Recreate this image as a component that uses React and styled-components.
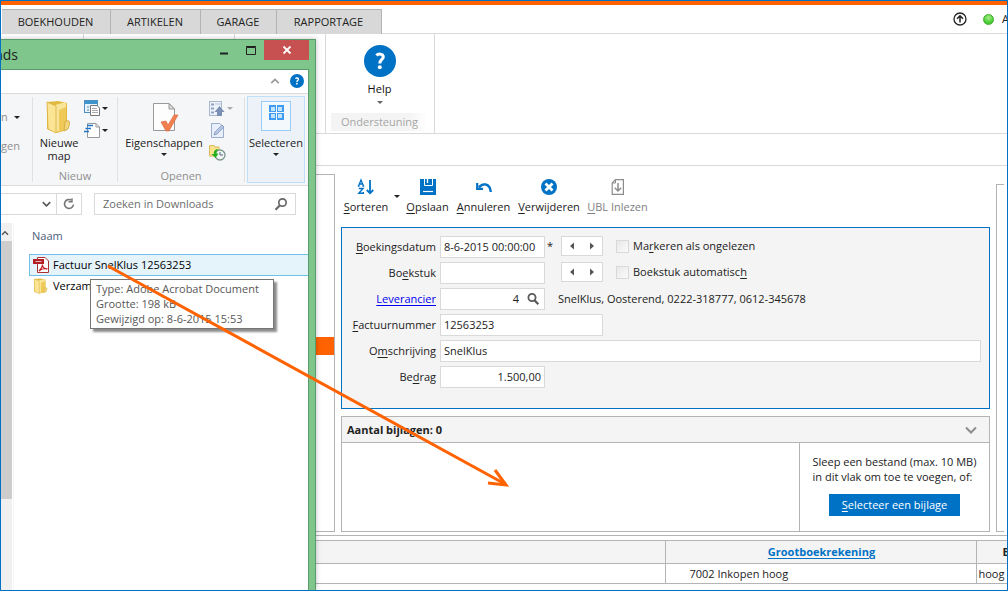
import React from 'react'
import styled, { createGlobalStyle, css } from 'styled-components'

const BLUE = '#0072c6'
const ORANGE = '#ff6200'
const GREEN = '#7fc68c'
const GREEN_DARK = '#5c9c6c'
const LINE = '#b4b4b4'
const LINE_LIGHT = '#d9d9d9'
const PANEL = '#f4f4f4'

const GlobalStyle = createGlobalStyle`
  * { box-sizing: border-box; }
  body { margin: 0; background: #fff; }
  body, button, input {
    font-family: "Open Sans", "Noto Sans", sans-serif;
    font-size: 11px;
    line-height: 16px;
    color: #222;
  }
  button { background: none; border: 0; padding: 0; }
`

const Frame = styled.div`
  position: relative;
  display: flex;
  flex-direction: column;
  min-height: 100vh;
  border: 1px solid ${BLUE};
  overflow: hidden;
`

/* ---------- top of the bookkeeping app ---------- */

const TopStripe = styled.div`
  height: 4px;
  background: ${ORANGE};
`

const TabBar = styled.div`
  display: flex;
  align-items: flex-end;
  height: 29px;
  padding-left: 1px;
  border-bottom: 1px solid ${LINE_LIGHT};
`

const Tab = styled.button`
  height: 25px;
  width: ${props => props.$width}px;
  margin-bottom: -1px;
  padding-right: 1px;
  background: #d8d8d8;
  border-top: 1px solid ${LINE};
  border-right: 1px solid ${LINE};
  white-space: nowrap;
  display: flex;
  align-items: center;
  justify-content: center;
`

const Status = styled.div`
  display: flex;
  align-items: center;
  gap: 14px;
  height: 28px;
  margin-left: auto;
  width: 54px;
  overflow: hidden;
  white-space: nowrap;

  svg, span { flex: none; }
`

const StatusDot = styled.span`
  width: 11px;
  height: 11px;
  border-radius: 50%;
  margin: 0 -6px 0 2px;
  border: 1px solid #3fae2a;
  background: radial-gradient(circle at 50% 30%, #a4ee84, #3cc72c 75%);
`

const Ribbon = styled.div`
  display: flex;
  height: 100px;
  border-bottom: 1px solid ${LINE_LIGHT};
`

const RibbonGroup = styled.div`
  width: ${props => props.$width}px;
  border-right: 1px solid ${LINE_LIGHT};
  display: flex;
  flex-direction: column;
  align-items: center;
  padding: 11px 6px 2px 5px;
`

const HelpButton = styled.button`
  display: flex;
  flex-direction: column;
  align-items: center;
  gap: 4px;
  color: #111;
`

const GroupCaption = styled.div`
  align-self: stretch;
  margin-top: auto;
  height: 18px;
  line-height: 17px;
  text-align: center;
  color: #a6a6a6;
  background: linear-gradient(90deg, ${PANEL} 80%, #fff);
`

const Strip = styled.div`
  height: 32px;
  border-bottom: 1px solid ${LINE_LIGHT};
`

const Workspace = styled.div`
  flex: 1;
  display: flex;
  gap: 6px;
  padding: 8px 3px 3px 0;
  border-bottom: 1px solid ${LINE};
`

const ListPanel = styled.div`
  width: 334px;
  flex: none;
  border: 1px solid ${LINE};
  border-left: 0;
  padding-top: 162px;
`

const ListSelection = styled.div`
  height: 18px;
  background: ${ORANGE};
`

const SidePanel = styled.div`
  width: 8px;
  flex: none;
  margin-top: 10px;
  border: 1px solid ${LINE};
  border-right: 0;
`

const Main = styled.main`
  flex: 1;
  min-width: 0;
  display: flex;
  flex-direction: column;
`

/* ---------- toolbar ---------- */

const Toolbar = styled.div`
  display: flex;
  align-items: flex-start;
  gap: 7px;
  padding: 4px 0 0 3px;
  height: 53px;
`

const ToolButton = styled.button`
  width: ${props => props.$width}px;
  display: flex;
  flex-direction: column;
  align-items: center;
  gap: 3px;
  white-space: nowrap;
  color: ${props => (props.$muted ? '#808080' : '#222')};
`

const DropMark = styled.span`
  width: 0;
  height: 0;
  border: solid transparent;
  border-width: 3px 3px 0;
  border-top-color: ${props => props.$color || '#222'};
`

const SortDrop = styled.button`
  width: 4px;
  height: 20px;
  display: flex;
  align-items: flex-end;
  justify-content: center;
`

const Key = styled.span`
  text-decoration: underline;
  text-underline-offset: 2px;
`

/* ---------- form ---------- */

const Form = styled.form`
  height: 182px;
  border: 1px solid ${BLUE};
  background: ${PANEL};
  padding: 8px;
  display: grid;
  grid-template-columns: 86px 1fr;
  grid-auto-rows: 22px;
  gap: 4px;
`

const Label = styled.label`
  line-height: 22px;
  text-align: right;
  white-space: nowrap;
  display: flex;
  justify-content: flex-end;
  align-items: center;

  a { color: #0000ee; text-underline-offset: 2px; }
`

const Cell = styled.div`
  display: flex;
  align-items: center;
  white-space: nowrap;
`

const inputBox = css`
  height: 22px;
  border: 1px solid ${LINE_LIGHT};
  background: #fff;
`

const TextInput = styled.input`
  ${inputBox}
  width: ${props => props.$width || '105px'};
  padding: 0 3px 1px;
  text-align: ${props => props.$align || 'left'};
  outline: 0;
`

const LookupBox = styled.div`
  ${inputBox}
  width: 105px;
  display: flex;
  align-items: center;
  padding-right: 4px;

  input {
    flex: 1;
    min-width: 0;
    border: 0;
    outline: 0;
    text-align: right;
    padding: 0 7px 0 0;
    background: none;
  }
  button { display: flex; }
`

const Required = styled.span`
  width: 16px;
  padding-left: 2px;
`

const Stepper = styled.div`
  ${inputBox}
  height: 20px;
  width: 42px;
  display: flex;
  margin-right: 13px;

  button {
    flex: 1;
    display: flex;
    align-items: center;
    justify-content: center;
  }
`

const FieldRow = styled(Cell)`
  padding-bottom: 2px;

  > input { margin-bottom: -2px; }
`

const CheckLabel = styled.label`
  display: flex;
  align-items: center;
  gap: 4px;

  input {
    appearance: none;
    width: 13px;
    height: 13px;
    margin: 0;
    border: 1px solid ${LINE_LIGHT};
    background: linear-gradient(135deg, #e9e9e9, #fafafa);
  }
`

const SupplierInfo = styled.span`
  padding-left: 13px;
`

/* ---------- attachments ---------- */

const Attachments = styled.section`
  margin-top: 7px;
  flex: 1;
  border: 1px solid ${LINE};
  display: flex;
  flex-direction: column;
`

const AttachmentsHead = styled.div`
  height: 26px;
  padding: 0 12px 0 5px;
  display: flex;
  align-items: center;
  justify-content: space-between;
  background: ${PANEL};
  border-bottom: 1px solid ${LINE};
  font-weight: bold;
`

const AttachmentsBody = styled.div`
  flex: 1;
  display: flex;
  justify-content: flex-end;
`

const DropHint = styled.div`
  width: 190px;
  border-left: 1px solid ${LINE};
  padding-top: 11px;
  display: flex;
  flex-direction: column;
  align-items: center;
  line-height: 15px;
  white-space: nowrap;
`

const SelectButton = styled.button`
  width: 131px;
  height: 22px;
  margin-top: 10px;
  background: ${BLUE};
  color: #fff;
`

/* ---------- ledger table ---------- */

const LedgerTable = styled.table`
  margin: 4px 0 6px;
  width: 100%;
  table-layout: fixed;
  border-collapse: collapse;

  th, td {
    border: 1px solid ${LINE};
    padding: 0 0 0 2px;
    overflow: hidden;
    white-space: nowrap;
    text-align: left;
  }
  th:first-child, td:first-child { border-left: 0; }
  th:last-child, td:last-child { border-right: 0; }
  th { height: 23px; background: ${PANEL}; }
  td { height: 20px; }
  th:nth-child(2) { text-align: center; }
  td:nth-child(2) { padding-left: 24px; }
  th:last-child { padding-left: 26px; }
  a { color: ${BLUE}; text-underline-offset: 2px; }
`

/* ---------- explorer window, floats over the app ---------- */

const Explorer = styled.div`
  position: absolute;
  left: 0;
  top: 38px;
  bottom: 0;
  width: 315px;
  display: flex;
  flex-direction: column;
  background: ${GREEN};
  border: 1px solid ${GREEN_DARK};
  border-width: 1px 1px 0 0;
  padding-right: 6px;
  box-shadow: 0 0 5px rgba(0, 0, 0, 0.25);
`

const TitleBar = styled.div`
  height: 29px;
  flex: none;
  display: flex;
  align-items: flex-start;
`

const Title = styled.div`
  width: 17px;
  font-size: 14px;
  line-height: 30px;
  display: flex;
  justify-content: flex-end;
  overflow: hidden;
`

const WindowButtons = styled.div`
  margin-left: auto;
  display: flex;

  button {
    width: 27px;
    height: 20px;
    display: flex;
    justify-content: center;
    align-items: center;
  }
  button:last-child { width: 45px; background: #c75050; }
`

const WindowBody = styled.div`
  flex: 1;
  display: flex;
  flex-direction: column;
  background: #fff;
  border: 1px solid ${GREEN_DARK};
  border-width: 1px 1px 0 0;
`

const HelpBar = styled.div`
  height: 24px;
  display: flex;
  align-items: center;
  justify-content: flex-end;
  gap: 10px;
  padding: 0 4px 2px 0;
  border-bottom: 1px solid #dadbdc;

  button { display: flex; }
`

const ExplorerRibbon = styled.div`
  height: 92px;
  display: flex;
  padding: 3px 3px 3px 0;
  background: #f5f6f7;
  border-bottom: 1px solid #dadbdc;
  line-height: 13px;
`

const ExplorerGroup = styled.div`
  flex: none;
  width: ${props => props.$width}px;
  border-right: 1px solid #e0e1e2;
  display: flex;
  flex-direction: column;
  justify-content: space-between;
  overflow: hidden;
`

const GroupTools = styled.div`
  display: flex;
  gap: 5px;
  padding: 3px 0 0 6px;
`

const CutOff = styled.div`
  width: 20px;
  display: flex;
  flex-direction: column;
  align-items: flex-start;
  gap: 14px;
  padding-top: 12px;
  color: #8f8f8f;

  button { display: flex; align-items: center; gap: 6px; color: inherit; }
`

const GroupName = styled.div`
  text-align: center;
  color: #8f8f8f;
  line-height: 12px;
`

const BigTool = styled.button`
  width: ${props => props.$width}px;
  display: flex;
  flex-direction: column;
  align-items: center;
  line-height: 13px;
  color: #222;

  svg { margin-bottom: 2px; }
  span { margin-top: 4px; }
`

const SmallTools = styled.div`
  display: flex;
  flex-direction: column;
  gap: 5px;

  button { display: flex; align-items: center; gap: 1px; }
`

const SelectTool = styled(BigTool)`
  flex: 1;
  margin: -1px 0 -1px 2px;
  padding-top: 4px;
  background: #ecf2f7;
  border: 1px solid #bfdff8;

  svg { margin-bottom: 5px; }
`

const AddressRow = styled.div`
  display: flex;
  padding: 7px 12px 8px 0;
  height: 37px;
`

const AddressTail = styled.div`
  width: 81px;
  margin-right: 12px;
  border: 1px solid ${LINE_LIGHT};
  border-left: 0;
  display: flex;
  justify-content: flex-end;

  button {
    width: 25px;
    display: flex;
    align-items: center;
    justify-content: center;
  }
  button:first-child { width: 19px; }
  button + button { border-left: 1px solid ${LINE_LIGHT}; }
`

const SearchBox = styled.label`
  flex: 1;
  display: flex;
  align-items: center;
  padding: 0 7px 0 8px;
  border: 1px solid ${LINE_LIGHT};

  input { flex: 1; min-width: 0; border: 0; outline: 0; padding: 0; }
  input::placeholder { color: #6d6d6d; opacity: 1; }
`

const FileArea = styled.div`
  flex: 1;
  display: flex;
`

const ScrollBar = styled.div`
  width: 11px;
  background: #f0f0f0;

  svg { display: block; margin: 6px 0 4px; }
`

const ScrollThumb = styled.div`
  height: 258px;
  background: #cdcdcd;
`

const FileList = styled.div`
  flex: 1;
  margin-left: 1px;
  padding-left: 15px;
  border-left: 1px solid #f5f5f5;
`

const ColumnHead = styled.div`
  height: 31px;
  padding: 5px 0 0 3px;
  color: #4c607a;
`

const FileRow = styled.div`
  height: ${props => (props.$selected ? 22 : 20)}px;
  display: flex;
  align-items: center;
  gap: 4px;
  padding-left: 3px;
  color: #000;
  white-space: nowrap;
  border: 1px solid ${props => (props.$selected ? '#70c0e7' : 'transparent')};
  border-right: 0;
  background: ${props => (props.$selected ? '#e5f3fb' : 'none')};
`

const Tooltip = styled.div`
  position: absolute;
  left: 89px;
  top: 239px;
  width: 184px;
  height: 50px;
  padding: 1px 5px;
  line-height: 15px;
  white-space: nowrap;
  color: #575757;
  background: #fff;
  border: 1px solid #767676;
  box-shadow: 3px 3px 2px rgba(0, 0, 0, 0.45);
`

const DragArrow = styled.svg`
  position: absolute;
  left: 0;
  top: 0;
  pointer-events: none;
`

/* ---------- icons ---------- */

const UploadCircle = () => (
  <svg width='14' height='14' viewBox='0 0 14 14' fill='none' stroke='#222'>
    <circle cx='7' cy='7' r='6' strokeWidth='1.3' />
    <path d='M7 10.5V4M4 6.8L7 3.8L10 6.8' strokeWidth='1.5' />
  </svg>
)

const HelpIcon = ({ size }) => (
  <svg width={size} height={size} viewBox='0 0 32 32'>
    <circle cx='16' cy='16' r='16' fill={BLUE} />
    <path d='M12.5 10.5C14 8.5 19.3 8.4 19.3 12C19.3 14.5 15.8 14.6 15.8 18.5' fill='none' stroke='#fff' strokeWidth='3' />
    <circle cx='15.8' cy='22.2' r='2' fill='#fff' />
  </svg>
)

const SortIcon = () => (
  <svg width='18' height='18' viewBox='0 0 18 18' fill='none' stroke={BLUE}>
    <path d='M1.500 8L4 2L6.500 8M2.300 6H5.700M0.800 8H2.600M5.400 8H7.200' strokeWidth='1.3' />
    <path d='M1.800 10.500H6L1.800 15.300H6.300V14' strokeWidth='1.4' />
    <path d='M13 2V15M9.800 12L13 15.200L16.200 12' strokeWidth='1.8' />
  </svg>
)

const SaveIcon = () => (
  <svg width='18' height='18' viewBox='0 0 18 18'>
    <path d='M1 1H17V17H1Z' fill={BLUE} />
    <path d='M5.500 1V7.500H13.500V1' fill='none' stroke='#fff' />
    <path d='M8.500 1V5' stroke='#fff' strokeWidth='1.4' />
    <path d='M4 13.500H14' stroke='#fff' strokeWidth='1.2' />
  </svg>
)

const UndoIcon = () => (
  <svg width='18' height='18' viewBox='0 0 18 18' fill='none' stroke={BLUE} strokeWidth='2.400'>
    <path d='M4 9.500C7 5 15 4.500 15.800 14' />
    <path d='M2.200 5V10.800H8' strokeWidth='2.200' />
  </svg>
)

const RemoveIcon = () => (
  <svg width='18' height='18' viewBox='0 0 18 18'>
    <circle cx='9' cy='9' r='8' fill={BLUE} />
    <path d='M5.500 5.500L12.500 12.500M12.500 5.500L5.500 12.500' stroke='#fff' strokeWidth='2.800' />
  </svg>
)

const ImportIcon = () => (
  <svg width='18' height='18' viewBox='0 0 18 18' fill='none' stroke='#8c8c8c'>
    <path d='M6.500 1.600H14.400V16.400H3.200V5Z' strokeWidth='1.200' />
    <path d='M6.500 1.600V5H3.200' />
    <path d='M9 5V12.500M5.800 9.800L9 13L12.200 9.800' strokeWidth='1.500' />
  </svg>
)

const SearchIcon = ({ flip, size = 14, color = '#5a5a5a' }) => (
  <svg width={size} height={size} viewBox='0 0 14 14' fill='none' stroke={color}>
    {flip
      ? <g><circle cx='8.500' cy='5.500' r='3.700' strokeWidth='1.700' /><path d='M6 8.300L1.500 12.800' strokeWidth='2.200' /></g>
      : <g><circle cx='6' cy='5.500' r='3.600' strokeWidth='1.800' /><path d='M8.500 8.200L12.300 12.300' strokeWidth='2.200' /></g>}
  </svg>
)

const StepMark = ({ right }) => (
  <svg width='6' height='8' viewBox='0 0 6 8' fill='#555'>
    <path d={right ? 'M1 0.500L5 4L1 7.500Z' : 'M5 0.500L1 4L5 7.500Z'} />
  </svg>
)

const Chevron = ({ up, width = 12, color = '#8c8c8c', stroke = 2 }) => (
  <svg width={width} height='8' viewBox='0 0 12 8' fill='none' stroke={color} strokeWidth={stroke}>
    <path d={up ? 'M1.500 6.500L6 2L10.500 6.500' : 'M1 1.500L6 6.500L11 1.500'} />
  </svg>
)

const FolderIcon = ({ width, height }) => (
  <svg width={width} height={height} viewBox='0 0 28 34' preserveAspectRatio='none'>
    <path d='M2 2L13 1L22 3V30L12 33L2 29Z' fill='#e2b93f' />
    <path d='M10 5L21 2V29L11 32Z' fill='#f8e59a' />
    <path d='M2 2L11 6V33L3 29Z' fill='#fbe493' stroke='#d9ae3c' strokeWidth='0.800' />
    <path d='M14 10L21 7V30L14 32Z' fill='#efca58' />
    <path d='M20 22C26 18 25 24 23 29L19 31Z' fill='#f3d67b' stroke='#cda43a' strokeWidth='0.800' />
  </svg>
)

const NewItemIcon = () => (
  <svg width='17' height='17' viewBox='0 0 17 17'>
    <rect x='0.500' y='0.500' width='13' height='12' fill='#e8f2fa' stroke='#4e90bf' />
    <path d='M1 2.500H13' stroke='#3d95d0' strokeWidth='3' />
    <path d='M3 7H5M3 10H5' stroke='#5b87a8' />
    <path d='M6.500 5.500H13L15.500 8V15.500H6.500Z' fill='#fff' stroke='#777' />
    <path d='M8 8.500H13M8 10.500H14M8 12.500H14' stroke='#aaa' />
  </svg>
)

const EasyAccessIcon = () => (
  <svg width='17' height='17' viewBox='0 0 17 17'>
    <path d='M3.500 1.500H12L15.500 5V15.500H3.500Z' fill='#fff' stroke='#999' />
    <path d='M12 1.500V5H15.500' fill='none' stroke='#999' />
    <path d='M3 3.500H9M1.500 6.500H7M0 9.500H5' stroke='#1e74c9' strokeWidth='1.600' />
  </svg>
)

const PropertiesIcon = () => (
  <svg width='30' height='34' viewBox='0 0 30 34'>
    <path d='M4.500 3.500H20L25.500 9V30.500H4.500Z' fill='#fdfdfd' stroke='#999' />
    <path d='M20 3.500V9H25.500Z' fill='#ddd' stroke='#999' />
    <path d='M12 22L17 21L19 25L25 15L29 15L20 31H17Z' fill='#f0804f' stroke='#d9603a' strokeWidth='0.600' />
  </svg>
)

const OpenIcon = () => (
  <svg width='17' height='17' viewBox='0 0 17 17'>
    <rect x='0.500' y='1.500' width='12' height='14' fill='#eef2f9' stroke='#a9b7cf' />
    <path d='M2 4.500H5M2 8.500H5M2 12.500H5' stroke='#8fa2c4' strokeWidth='2' />
    <path d='M6 4H12' stroke='#b7c3d8' />
    <path d='M8 16V12H5.500L10.500 6L15.500 12H13V16Z' fill='#7c8fb4' />
  </svg>
)

const EditIcon = () => (
  <svg width='17' height='17' viewBox='0 0 17 17'>
    <path d='M2.500 1.500H11L14.500 5V15.500H2.500Z' fill='#e9effa' stroke='#9badcf' />
    <path d='M5 13L6 10L13 3L15 5L8 12Z' fill='#b7c6e2' stroke='#7f94bd' strokeWidth='0.800' />
  </svg>
)

const HistoryIcon = () => (
  <svg width='17' height='17' viewBox='0 0 17 17'>
    <path d='M0.500 1.500H5L6 3H10V12H0.500Z' fill='#f8e28c' stroke='#dbb95c' />
    <circle cx='11' cy='11' r='5' fill='#f0f5f3' stroke='#7d948c' strokeWidth='1.300' />
    <path d='M11 8V11H14' fill='none' stroke='#567' />
    <path d='M8 5C5 6 4.500 8 5 10H2.500L6.500 14L9.500 9.500H7.500C7.300 8 7.500 6.500 9 5.500Z' fill='#22b021' />
  </svg>
)

const SelectIcon = () => (
  <svg width='30' height='30' viewBox='0 0 30 30'>
    <rect x='0.500' y='0.500' width='29' height='29' fill='#f3f8fd' stroke='#99cdf7' />
    <rect x='8' y='4' width='15' height='15' fill='#3f9cf0' />
    <g fill='#c3e3fd'>
      <rect x='10' y='6' width='4' height='4' />
      <rect x='17' y='6' width='4' height='4' />
      <rect x='10' y='13' width='4' height='4' />
      <rect x='17' y='13' width='4' height='4' />
    </g>
    <path d='M15.500 4V19M8 11.500H23' stroke='#f3f8fd' />
  </svg>
)

const RefreshIcon = () => (
  <svg width='12' height='12' viewBox='0 0 12 12' fill='none' stroke='#777' strokeWidth='1.600'>
    <path d='M8.500 2.200A4.500 4.500 0 1 0 10.500 6.500' />
    <path d='M5.500 3.800H9V0.300' strokeWidth='1.400' />
  </svg>
)

const PdfIcon = () => (
  <svg width='16' height='16' viewBox='0 0 16 16'>
    <path d='M4.500 0.500H12L15.500 4V15.500H4.500Z' fill='#fff' stroke='#a33' />
    <path d='M0 2H11V7H0Z' fill='#b11f24' />
    <path d='M2.500 4.500H8.500' stroke='#e9b9ba' />
    <path d='M6 14C9 11 9.500 9 9.300 7.500C9.500 11 12 12 14.500 11.800C11 11 8.500 12 6 14Z' fill='none' stroke='#c4161c' strokeWidth='1.100' />
  </svg>
)

/* ---------- data ---------- */

const tabs = [
  { name: 'BOEKHOUDEN', width: 109 },
  { name: 'ARTIKELEN', width: 90 },
  { name: 'GARAGE', width: 76 },
  { name: 'RAPPORTAGE', width: 105 }
]

const tools = [
  { key: 'O', rest: 'pslaan', width: 43, icon: <SaveIcon /> },
  { key: 'A', rest: 'nnuleren', width: 55, icon: <UndoIcon /> },
  { key: 'V', rest: 'erwijderen', width: 62, icon: <RemoveIcon /> },
  { key: 'U', rest: 'BL Inlezen', width: 61, icon: <ImportIcon />, muted: true }
]

const StepperButtons = () => (
  <Stepper>
    <button type='button' aria-label='Vorige'><StepMark /></button>
    <button type='button' aria-label='Volgende'><StepMark right /></button>
  </Stepper>
)

const BookingForm = () => (
  <Form>
    <Label htmlFor='datum'><Key>B</Key>oekingsdatum</Label>
    <FieldRow>
      <TextInput id='datum' defaultValue='8-6-2015 00:00:00' />
      <Required>*</Required>
      <StepperButtons />
      <CheckLabel><input type='checkbox' /><span>Ma<Key>r</Key>keren als ongelezen</span></CheckLabel>
    </FieldRow>

    <Label htmlFor='boekstuk'>Bo<Key>e</Key>kstuk</Label>
    <FieldRow>
      <TextInput id='boekstuk' />
      <Required />
      <StepperButtons />
      <CheckLabel><input type='checkbox' /><span>Boekstuk automatisc<Key>h</Key></span></CheckLabel>
    </FieldRow>

    <Label htmlFor='leverancier'><a href='#leverancier'>Leverancier</a></Label>
    <Cell>
      <LookupBox>
        <input id='leverancier' defaultValue='4' />
        <button type='button' aria-label='Zoeken'><SearchIcon /></button>
      </LookupBox>
      <SupplierInfo>SnelKlus, Oosterend, 0222-318777, 0612-345678</SupplierInfo>
    </Cell>

    <Label htmlFor='factuur'><Key>F</Key>actuurnummer</Label>
    <Cell><TextInput id='factuur' $width='163px' defaultValue='12563253' /></Cell>

    <Label htmlFor='omschrijving'>O<Key>m</Key>schrijving</Label>
    <Cell><TextInput id='omschrijving' $width='100%' defaultValue='SnelKlus' /></Cell>

    <Label htmlFor='bedrag'>Be<Key>d</Key>rag</Label>
    <Cell><TextInput id='bedrag' $align='right' defaultValue='1.500,00' /></Cell>
  </Form>
)

const ExplorerWindow = () => (
  <Explorer>
    <TitleBar>
      <Title>nds</Title>
      <WindowButtons>
        <button aria-label='Minimaliseren'>
          <svg width='10' height='12'><path d='M1 9.500H9' stroke='#222' strokeWidth='2' /></svg>
        </button>
        <button aria-label='Maximaliseren'>
          <svg width='12' height='12'><path d='M1.500 3.500H10.500V10.500H1.500ZM1 2.500H11' fill='none' stroke='#222' /></svg>
        </button>
        <button aria-label='Sluiten'>
          <svg width='10' height='10'><path d='M1.500 1.500L8.500 8.500M8.500 1.500L1.500 8.500' stroke='#fff' strokeWidth='1.800' /></svg>
        </button>
      </WindowButtons>
    </TitleBar>
    <WindowBody>
      <HelpBar>
        <button aria-label='Lint verbergen'><Chevron up width={10} color='#999' /></button>
        <button aria-label='Help'><HelpIcon size={14} /></button>
      </HelpBar>
      <ExplorerRibbon>
        <ExplorerGroup $width={32}>
          <CutOff>
            <button>n <DropMark /></button>
            <span>gen</span>
          </CutOff>
        </ExplorerGroup>
        <ExplorerGroup $width={85}>
          <GroupTools>
            <BigTool $width={40}>
              <FolderIcon width={28} height={34} />
              Nieuwe<br />map
            </BigTool>
            <SmallTools>
              <button aria-label='Nieuw item'><NewItemIcon /><DropMark /></button>
              <button aria-label='Snelle toegang'><EasyAccessIcon /><DropMark /></button>
            </SmallTools>
          </GroupTools>
          <GroupName>Nieuw</GroupName>
        </ExplorerGroup>
        <ExplorerGroup $width={127}>
          <GroupTools>
            <BigTool $width={80}>
              <PropertiesIcon />
              Eigenschappen
              <DropMark />
            </BigTool>
            <SmallTools>
              <button aria-label='Openen'><OpenIcon /><DropMark $color='#aaa' /></button>
              <button aria-label='Bewerken'><EditIcon /></button>
              <button aria-label='Geschiedenis'><HistoryIcon /></button>
            </SmallTools>
          </GroupTools>
          <GroupName>Openen</GroupName>
        </ExplorerGroup>
        <SelectTool>
          <SelectIcon />
          Selecteren
          <DropMark />
        </SelectTool>
      </ExplorerRibbon>
      <AddressRow>
        <AddressTail>
          <button aria-label='Vorige locaties'><Chevron width={9} color='#555' /></button>
          <button aria-label='Vernieuwen'><RefreshIcon /></button>
        </AddressTail>
        <SearchBox>
          <input placeholder='Zoeken in Downloads' />
          <SearchIcon flip color='#666' />
        </SearchBox>
      </AddressRow>
      <FileArea>
        <ScrollBar>
          <Chevron up width={8} color='#555' />
          <ScrollThumb />
        </ScrollBar>
        <FileList>
          <ColumnHead>Naam</ColumnHead>
          <FileRow $selected><PdfIcon />Factuur SnelKlus 12563253</FileRow>
          <FileRow><FolderIcon width={16} height={16} />Verzam</FileRow>
        </FileList>
      </FileArea>
    </WindowBody>
    <Tooltip>
      Type: Adobe Acrobat Document<br />
      Grootte: 198 kB<br />
      Gewijzigd op: 8-6-2015 15:53
    </Tooltip>
  </Explorer>
)

export default function App () {
  return (
    <Frame>
      <GlobalStyle />
      <TopStripe />
      <TabBar>
        {tabs.map(tab => <Tab key={tab.name} $width={tab.width}>{tab.name}</Tab>)}
        <Status>
          <UploadCircle />
          <StatusDot />
          <span>A</span>
        </Status>
      </TabBar>
      <Ribbon>
        <RibbonGroup $width={83} />
        <RibbonGroup $width={151} />
        <RibbonGroup $width={91} />
        <RibbonGroup $width={109}>
          <HelpButton>
            <HelpIcon size={32} />
            Help
            <DropMark $color='#666' />
          </HelpButton>
          <GroupCaption>Ondersteuning</GroupCaption>
        </RibbonGroup>
      </Ribbon>
      <Strip />
      <Workspace>
        <ListPanel>
          <ListSelection />
        </ListPanel>
        <Main>
          <Toolbar>
            <ToolButton $width={44}>
              <SortIcon />
              <span><Key>S</Key>orteren</span>
            </ToolButton>
            <SortDrop aria-label='Sorteeropties'><DropMark /></SortDrop>
            {tools.map(tool => (
              <ToolButton key={tool.key} $width={tool.width} $muted={tool.muted}>
                {tool.icon}
                <span><Key>{tool.key}</Key>{tool.rest}</span>
              </ToolButton>
            ))}
          </Toolbar>
          <BookingForm />
          <Attachments>
            <AttachmentsHead>
              Aantal bijlagen: 0
              <Chevron />
            </AttachmentsHead>
            <AttachmentsBody>
              <DropHint>
                <div>
                  Sleep een bestand (max. 10 MB)<br />
                  in dit vlak om toe te voegen, of:
                </div>
                <SelectButton><Key>S</Key>electeer een bijlage</SelectButton>
              </DropHint>
            </AttachmentsBody>
          </Attachments>
        </Main>
        <SidePanel />
      </Workspace>
      <LedgerTable>
        <colgroup>
          <col />
          <col width='311' />
          <col width='31' />
        </colgroup>
        <thead>
          <tr><th /><th><a href='#grootboek'>Grootboekrekening</a></th><th>B</th></tr>
        </thead>
        <tbody>
          <tr><td /><td>7002 Inkopen hoog</td><td>hoog</td></tr>
        </tbody>
      </LedgerTable>
      <ExplorerWindow />
      <DragArrow width='520' height='500' viewBox='0 0 520 500' fill='none' stroke={ORANGE}>
        <path d='M107 265L504 483' strokeWidth='3' />
        <path d='M494 469L505 484L487 482' strokeWidth='3' />
      </DragArrow>
    </Frame>
  )
}
